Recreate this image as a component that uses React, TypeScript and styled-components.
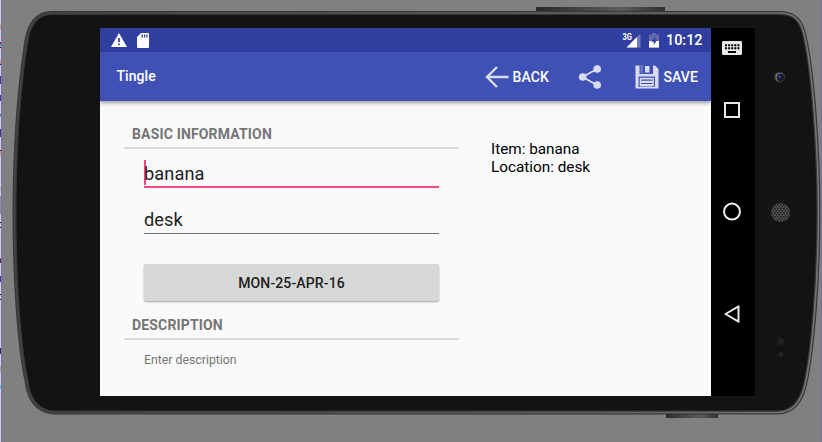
import React from "react";
import styled, { createGlobalStyle } from "styled-components";

const GlobalStyle = createGlobalStyle`
  *, *::before, *::after { box-sizing: border-box; }
  html, body { margin: 0; padding: 0; overflow: hidden; background: #808080; }
  body { font-family: Roboto, "Liberation Sans", sans-serif; }
`;

const Desktop = styled.main`
  position: relative;
  width: 822px;
  height: 442px;
  padding: 28px 0 0 100px;
  background: #808080;
  overflow: hidden;
`;

const Backdrop = styled.svg`
  position: absolute;
  inset: 0;
`;

const Display = styled.div`
  position: relative;
  display: flex;
  width: 655px;
  height: 368px;
  background: #000;
`;

const AppScreen = styled.section`
  display: flex;
  flex-direction: column;
  width: 611px;
  height: 368px;
  background: #fafafa;
`;

const StatusBar = styled.header`
  display: flex;
  align-items: center;
  justify-content: space-between;
  height: 24px;
  padding: 0 8.5px 0 11px;
  background: #303f9f;
  color: #fff;
`;

const StatusGroup = styled.div<{ $gap: number }>`
  display: flex;
  align-items: center;
  gap: ${(p) => p.$gap}px;
`;

const Clock = styled.time`
  margin-left: -1px;
  font-size: 14.4px;
  font-weight: 500;
  line-height: 24px;
  padding-top: 2px;
`;

const AppBar = styled.div`
  display: flex;
  align-items: center;
  height: 49px;
  padding: 0 13px 0 16.5px;
  background: #3f51b5;
  color: #fff;
  box-shadow: 0 2px 4px rgba(0, 0, 0, 0.38);
  z-index: 1;
`;

const Title = styled.h1`
  flex: 1;
  margin: 0;
  font-size: 14px;
  font-weight: 500;
  line-height: 21px;
  letter-spacing: 0.05px;
`;

const Action = styled.button<{ $ml?: number }>`
  display: flex;
  align-items: center;
  gap: 4px;
  margin: 0 0 0 ${(p) => p.$ml ?? 0}px;
  padding: 0;
  border: 0;
  background: none;
  color: #fff;
  font: 500 14px/20px Roboto, sans-serif;
  letter-spacing: 0.1px;
`;

const Content = styled.div`
  display: flex;
  padding-left: 24px;
`;

const Form = styled.div`
  display: flex;
  flex-direction: column;
  width: 335px;
`;

const SectionTitle = styled.h2<{ $mt: number }>`
  margin: ${(p) => p.$mt}px 0 0;
  height: 26px;
  padding: 0 8px;
  border-bottom: 2px solid #dadada;
  color: #757575;
  font-size: 14px;
  font-weight: 700;
  line-height: 22px;
  letter-spacing: 0.16px;
`;

const Field = styled.div<{ $active?: boolean }>`
  display: flex;
  align-items: flex-start;
  width: 295px;
  height: ${(p) => (p.$active ? 39 : 46)}px;
  margin-left: 20px;
  padding-top: ${(p) => (p.$active ? 11 : 18)}px;
  border-bottom: ${(p) => (p.$active ? "2px solid #f5487f" : "1px solid #757575")};
  color: #212121;
  font-size: 18.2px;
  line-height: 27px;
  letter-spacing: 0.1px;
`;

const Caret = styled.span`
  width: 2px;
  height: 25px;
  margin-right: -2px;
  background: #ff4081;
`;

const DateButton = styled.button`
  width: 295px;
  height: 37px;
  margin: 30px 0 0 20px;
  padding: 1px 0 0;
  border: 0;
  border-radius: 2px;
  background: #d6d8d7;
  box-shadow: 0 1px 2px rgba(0, 0, 0, 0.35);
  color: #212121;
  font: 500 14px/36px Roboto, sans-serif;
  letter-spacing: 0.13px;
`;

const Hint = styled.div`
  margin: 11px 0 0 20px;
  color: #757575;
  font-size: 12.3px;
  line-height: 18px;
`;

const Summary = styled.div`
  padding: 39px 0 0 32px;
  color: #000;
  font-size: 15.3px;
  line-height: 18px;
`;

const NavBar = styled.nav`
  display: flex;
  flex-direction: column;
  align-items: center;
  width: 44px;
  padding-right: 2px;
`;

const NavItem = styled.div<{ $h: number }>`
  display: flex;
  align-items: center;
  height: ${(p) => p.$h}px;
`;

const SHELL =
  "M51 13H780C797 13 802 23 805 38C812 68 818.5 145 818.5 211C818.5 278 813 349 805 385C801 402 793 412 778 412.5H55C37 412 29 400 26.5 381C19 345 14.5 280 14.5 213C14.5 140 19 88 26.5 40C29.5 24 37 13.5 51 13Z";

const EDGE_MARKS: [number, number, string][] = [
  [24, 6, "#dcb878"], [42, 2, "#b01030"], [44, 2, "#20b0e8"], [47, 1, "#000"],
  [60, 5, "#e0a858"], [64, 1, "#000"], [76, 8, "#30308c"], [95, 6, "#30308c"],
  [114, 1, "#a02040"], [115, 2, "#30b8e8"], [129, 8, "#30308c"], [150, 1, "#000"],
  [151, 5, "#e8b060"], [187, 4, "#b8d080"], [196, 18, "#999"], [222, 1, "#000"],
  [227, 1, "#000"], [258, 1, "#e06020"], [259, 4, "#501060"], [276, 6, "#30308c"],
  [294, 1, "#000"], [299, 1, "#000"], [348, 6, "#252060"], [366, 6, "#d0b860"],
  [385, 4, "#60d8f0"],
];

function PhoneShell() {
  return (
    <Backdrop width="822" height="442" viewBox="0 0 822 442" aria-hidden="true">
      <defs>
        <linearGradient id="key">
          <stop offset="0" stopColor="#292929" />
          <stop offset=".65" stopColor="#5b5b5b" />
          <stop offset="1" stopColor="#303030" />
        </linearGradient>
        <linearGradient id="rim">
          <stop offset="0" stopColor="#424444" />
          <stop offset=".5" stopColor="#585858" />
          <stop offset="1" stopColor="#747474" />
        </linearGradient>
        <pattern id="mesh" width="3" height="4" patternUnits="userSpaceOnUse">
          <rect width="3" height="4" fill="#555" />
          <rect width="1.7" height="1.5" fill="#1c1c1c" />
          <rect x="1.5" y="2" width="1.5" height="1.5" fill="#1c1c1c" />
        </pattern>
      </defs>
      <path d="M.5 0V442" stroke="#e4e4ec" />
      {EDGE_MARKS.map(([y, h, fill]) => (
        <rect key={y} x="0" y={y} width="1" height={h} fill={fill} />
      ))}
      <path d="M1.3 0V442M821.5 0V442" stroke="#7568c0" strokeWidth=".8" />
      <rect x="536" y="7" width="129" height="6" fill="url(#key)" />
      <rect x="666" y="412" width="52" height="6" fill="url(#key)" />
      <path d={SHELL} fill="#131313" stroke="#363838" strokeWidth="4" />
      <path d={SHELL} fill="none" stroke="url(#rim)" strokeWidth="1.6" />
      <circle cx="779.5" cy="77" r="5.5" fill="#353535" />
      <circle cx="779.5" cy="77" r="4" fill="#777" />
      <circle cx="780.4" cy="77.3" r="3.6" fill="#15151f" />
      <circle cx="779.5" cy="76.8" r="1.7" fill="#3934a0" />
      <circle cx="780.5" cy="212.5" r="9.5" fill="url(#mesh)" />
      <circle cx="781" cy="341.5" r="4" fill="#1c1c1c" />
      <circle cx="781" cy="341" r="2" fill="#252525" />
      <circle cx="781" cy="354.5" r="2.5" fill="#202020" />
    </Backdrop>
  );
}

const WarningIcon = () => (
  <svg width="16" height="14" viewBox="0 0 16 14">
    <path d="M8 0L16 14H0Z" fill="#fff" />
    <path d="M8 5V9M8 10.5V12.2" stroke="#303f9f" strokeWidth="1.7" />
  </svg>
);

const SdCardIcon = () => (
  <svg width="12" height="15" viewBox="0 0 12 15">
    <path d="M4 0H11Q12 0 12 1V14Q12 15 11 15H1Q0 15 0 14V4Z" fill="#fff" />
    <path d="M5.2 1.5V4.5M7.6 1.5V4.5M10 1.5V4.5" stroke="#303f9f" strokeWidth="1.3" />
  </svg>
);

const SignalIcon = () => (
  <svg width="19" height="15" viewBox="0 0 19 15" overflow="visible">
    <path d="M18.5 .5V14.5H4.5Z" fill="#7179b8" />
    <path d="M15 4V14.5H4.5Z" fill="#fff" />
    <text x="0.4" y="6.6" fill="#fff" fontFamily="Roboto, sans-serif" fontSize="8.4" fontWeight="700" textLength="9.4" lengthAdjust="spacingAndGlyphs">3G</text>
  </svg>
);

const BatteryIcon = () => (
  <svg width="10" height="15" viewBox="0 0 10 15">
    <path d="M3 0H7V1.5H10V15H0V1.5H3Z" fill="#6069ae" />
    <path d="M0 8H10V14.5H0Z" fill="#fff" />
    <path d="M6.8 3.5L2.3 8.7H4.8V12L8 7.2H6Z" fill="#303f9f" />
  </svg>
);

const BackIcon = () => (
  <svg width="24" height="22" viewBox="0 0 24 22" fill="none" stroke="#d9dcf0" strokeWidth="2.4">
    <path d="M12 1L2 11L12 21M2 11H23.5" />
  </svg>
);

const ShareIcon = () => (
  <svg width="24" height="24" viewBox="0 0 24 24" fill="#d9dcf0">
    <path d="M19 4L4.5 12L19 20" fill="none" stroke="#d9dcf0" strokeWidth="1.8" />
    <circle cx="4.7" cy="12" r="3.8" />
    <circle cx="19.2" cy="4" r="3.8" />
    <circle cx="19.2" cy="20" r="3.8" />
  </svg>
);

const SaveIcon = () => (
  <svg width="24" height="24" viewBox="0 0 24 24">
    <path d="M.5 .5H20L23.5 4V23.5H.5Z" fill="#d9dcf0" />
    <path d="M4.5 0V9H18V0Z" fill="#3f51b5" />
    <path d="M5.5 0H8V8H5.5Z" fill="#d9dcf0" opacity=".3" />
    <rect x="10" y="1" width="4.5" height="6.5" fill="#d9dcf0" />
    <path d="M3.5 11.5H20V22H3.5Z" fill="#3f51b5" />
    <path d="M4.7 12.8H18.8V21.5H4.7Z" fill="#d9dcf0" />
    <path d="M6 15.2H17.5M6 18.5H17.5" stroke="#3f51b5" strokeWidth="1.2" />
  </svg>
);

const KeyboardIcon = () => (
  <svg width="20" height="14" viewBox="0 0 20 14">
    <rect width="20" height="14" rx="1.3" fill="#e8e8e8" />
    <path d="M3 4.3H17.5M3 7.3H17.5" stroke="#000" strokeWidth="2" strokeDasharray="2 1.1" />
    <rect x="6" y="10" width="8" height="2" fill="#000" />
  </svg>
);

const RecentsIcon = () => (
  <svg width="16" height="16" viewBox="0 0 16 16">
    <rect x="1" y="1" width="14" height="14" fill="none" stroke="#e8e8e8" strokeWidth="2" />
  </svg>
);

const HomeIcon = () => (
  <svg width="18" height="20" viewBox="0 0 18 20">
    <circle cx="9" cy="9.6" r="8" fill="none" stroke="#ececec" strokeWidth="2" />
  </svg>
);

const NavBackIcon = () => (
  <svg width="16" height="18" viewBox="0 0 16 18">
    <path d="M14.5 1.3V16.7L1.5 9Z" fill="none" stroke="#e8e8e8" strokeWidth="2" strokeLinejoin="round" />
  </svg>
);

export default function App() {
  return (
    <>
      <GlobalStyle />
      <Desktop>
        <PhoneShell />
        <Display>
          <AppScreen>
            <StatusBar>
              <StatusGroup $gap={10}>
                <WarningIcon />
                <SdCardIcon />
              </StatusGroup>
              <StatusGroup $gap={8}>
                <SignalIcon />
                <BatteryIcon />
                <Clock>10:12</Clock>
              </StatusGroup>
            </StatusBar>
            <AppBar>
              <Title>Tingle</Title>
              <Action><BackIcon />BACK</Action>
              <Action $ml={29} aria-label="Share"><ShareIcon /></Action>
              <Action $ml={33.5}><SaveIcon />SAVE</Action>
            </AppBar>
            <Content>
              <Form>
                <SectionTitle $mt={22}>BASIC INFORMATION</SectionTitle>
                <Field $active><Caret />banana</Field>
                <Field>desk</Field>
                <DateButton>MON-25-APR-16</DateButton>
                <SectionTitle $mt={13}>DESCRIPTION</SectionTitle>
                <Hint>Enter description</Hint>
              </Form>
              <Summary>
                <div>Item: banana</div>
                <div>Location: desk</div>
              </Summary>
            </Content>
          </AppScreen>
          <NavBar>
            <NavItem $h={40}><KeyboardIcon /></NavItem>
            <NavItem $h={83}><RecentsIcon /></NavItem>
            <NavItem $h={122}><HomeIcon /></NavItem>
            <NavItem $h={82}><NavBackIcon /></NavItem>
          </NavBar>
        </Display>
      </Desktop>
    </>
  );
}
